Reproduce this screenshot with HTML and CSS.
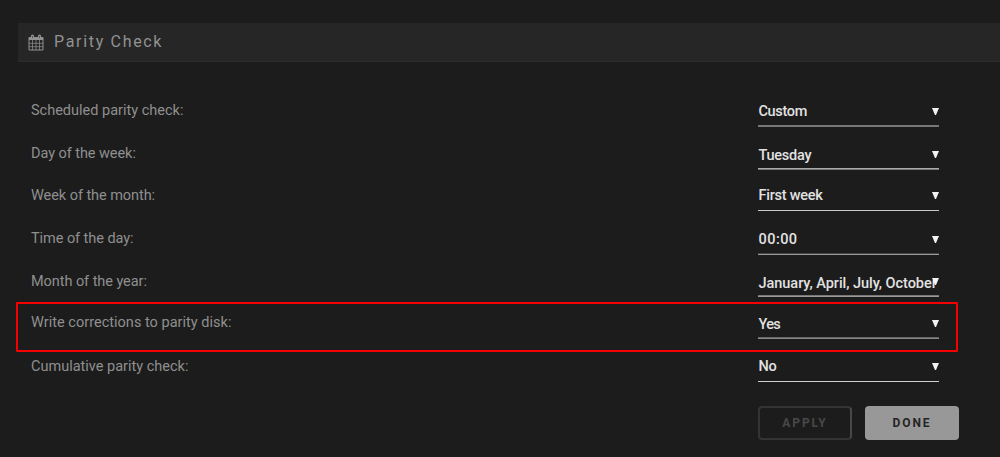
FILE: index.html
```
<!DOCTYPE html>
<html lang="en">
<head>
<meta charset="utf-8">
<title>Parity Check</title>
<link rel="stylesheet" href="styles.css">
</head>
<body>
<header class="title">
<svg class="calendar" viewBox="0 0 16 17" width="16" height="17"><path d="M1 3.500h14v12.500H1z" fill="none" stroke="currentColor" stroke-linejoin="round"/><path d="M1 3h14v3H1z" fill="currentColor"/><path d="M4.500 6v10M8 6v10M11.500 6v10M1 9.300h14M1 12.700h14" stroke="currentColor" stroke-width=".7"/><path d="M4.500 2v2M11.500 2v2" stroke="currentColor" stroke-width="3" stroke-linecap="round"/><path d="M4.500 2v2M11.500 2v2" stroke="#555" stroke-width="1"/></svg>
<h1 class="heading">Parity Check</h1>
</header>
<main class="settings">
<div class="row schedule"><span class="label">Scheduled parity check:</span><div class="select"><span class="value">Custom</span><i class="arrow"></i></div></div>
<div class="row day"><span class="label">Day of the week:</span><div class="select"><span class="value">Tuesday</span><i class="arrow"></i></div></div>
<div class="row week"><span class="label">Week of the month:</span><div class="select"><span class="value">First week</span><i class="arrow"></i></div></div>
<div class="row time"><span class="label">Time of the day:</span><div class="select"><span class="value">00:00</span><i class="arrow"></i></div></div>
<div class="row month"><span class="label">Month of the year:</span><div class="select"><span class="value">January, April, July, October</span><i class="arrow"></i></div></div>
<div class="row write"><span class="label">Write corrections to parity disk:</span><div class="select"><span class="value">Yes</span><i class="arrow"></i></div></div>
<div class="row cumulative"><span class="label">Cumulative parity check:</span><div class="select"><span class="value">No</span><i class="arrow"></i></div></div>
<div class="highlight"></div>
</main>
<div class="actions"><button class="button apply">APPLY</button><button class="button done">DONE</button></div>
</body>
</html>
```
FILE: styles.css
```
* { box-sizing: border-box; }
body { margin: 0; height: 457px; overflow: hidden; background: #1c1c1c; color: #8f8f8f; font-family: Roboto, sans-serif; padding-top: 23px; }
.title { height: 39px; margin-left: 18px; padding-left: 10px; background: #262626; border-bottom: 1px solid #2b2b2b; display: flex; align-items: center; gap: 10px; color: #929292; }
.heading { margin: 0; font-size: 16px; line-height: 20px; font-weight: 400; letter-spacing: 1.68px; }
.settings { position: relative; padding: 28px 61px 0 31px; }
.row { --label-gap: 7px; --value-gap: 5px; --line: #bdbdbd; --edge: #1c1c1c; height: 42px; display: flex; justify-content: space-between; align-items: flex-end; }
.label { font-size: 14.5px; line-height: 18px; margin-bottom: var(--label-gap); white-space: nowrap; }
.select { position: relative; width: 181px; height: 30px; border-bottom: 1px solid var(--line); box-shadow: inset 0 -1px var(--edge); display: flex; align-items: flex-end; padding-left: .5px; color: #e2e2e2; }
.value { font-size: 14.5px; font-weight: 500; line-height: 18px; margin-bottom: var(--value-gap); white-space: nowrap; }
.arrow { position: absolute; right: 0; bottom: 11px; width: 7px; height: 7px; background: #f2f2f2; clip-path: polygon(0 0, 100% 0, 57% 100%, 43% 100%); }
.schedule { --line: #777; --edge: #777; height: 37px; }
.schedule .value { letter-spacing: -.35px; }
.day { --value-gap: 4px; --line: #777; --edge: #aaa; height: 43px; }
.day .label, .week .label { letter-spacing: -.06px; }
.day .value, .week .value { letter-spacing: -.25px; }
.week { --label-gap: 6px; --line: #c8c8c8; height: 41px; }
.time { --line: #999; --edge: #444; height: 44px; }
.time .label, .month .label { letter-spacing: -.06px; }
.time .value { letter-spacing: .45px; }
.month { --label-gap: 6px; --value-gap: 3px; --line: #999; --edge: #777; }
.month .value { letter-spacing: -.04px; }
.write { --value-gap: 4px; --line: #888; --edge: #666; }
.write .label { letter-spacing: .02px; }
.write .value { letter-spacing: -.7px; }
.cumulative { --label-gap: 6px; --line: #d0d0d0; height: 43px; }
.cumulative .value { letter-spacing: -.4px; }
.highlight { position: absolute; left: 16px; top: 240px; width: 942px; height: 50px; border: 2px solid #f40000; border-radius: 1px; }
.actions { display: flex; gap: 13px; margin: 24px 0 0 758px; }
.button { height: 34px; padding: 0; border: 0; border-radius: 4px; font: 700 12px/35px Roboto, sans-serif; letter-spacing: 1.9px; }
.apply { width: 94px; border: 2px solid #343434; border-right-color: #484848; background: none; color: #484848; line-height: 31px; }
.done { width: 94px; background: #989898; color: #252525; }
```
